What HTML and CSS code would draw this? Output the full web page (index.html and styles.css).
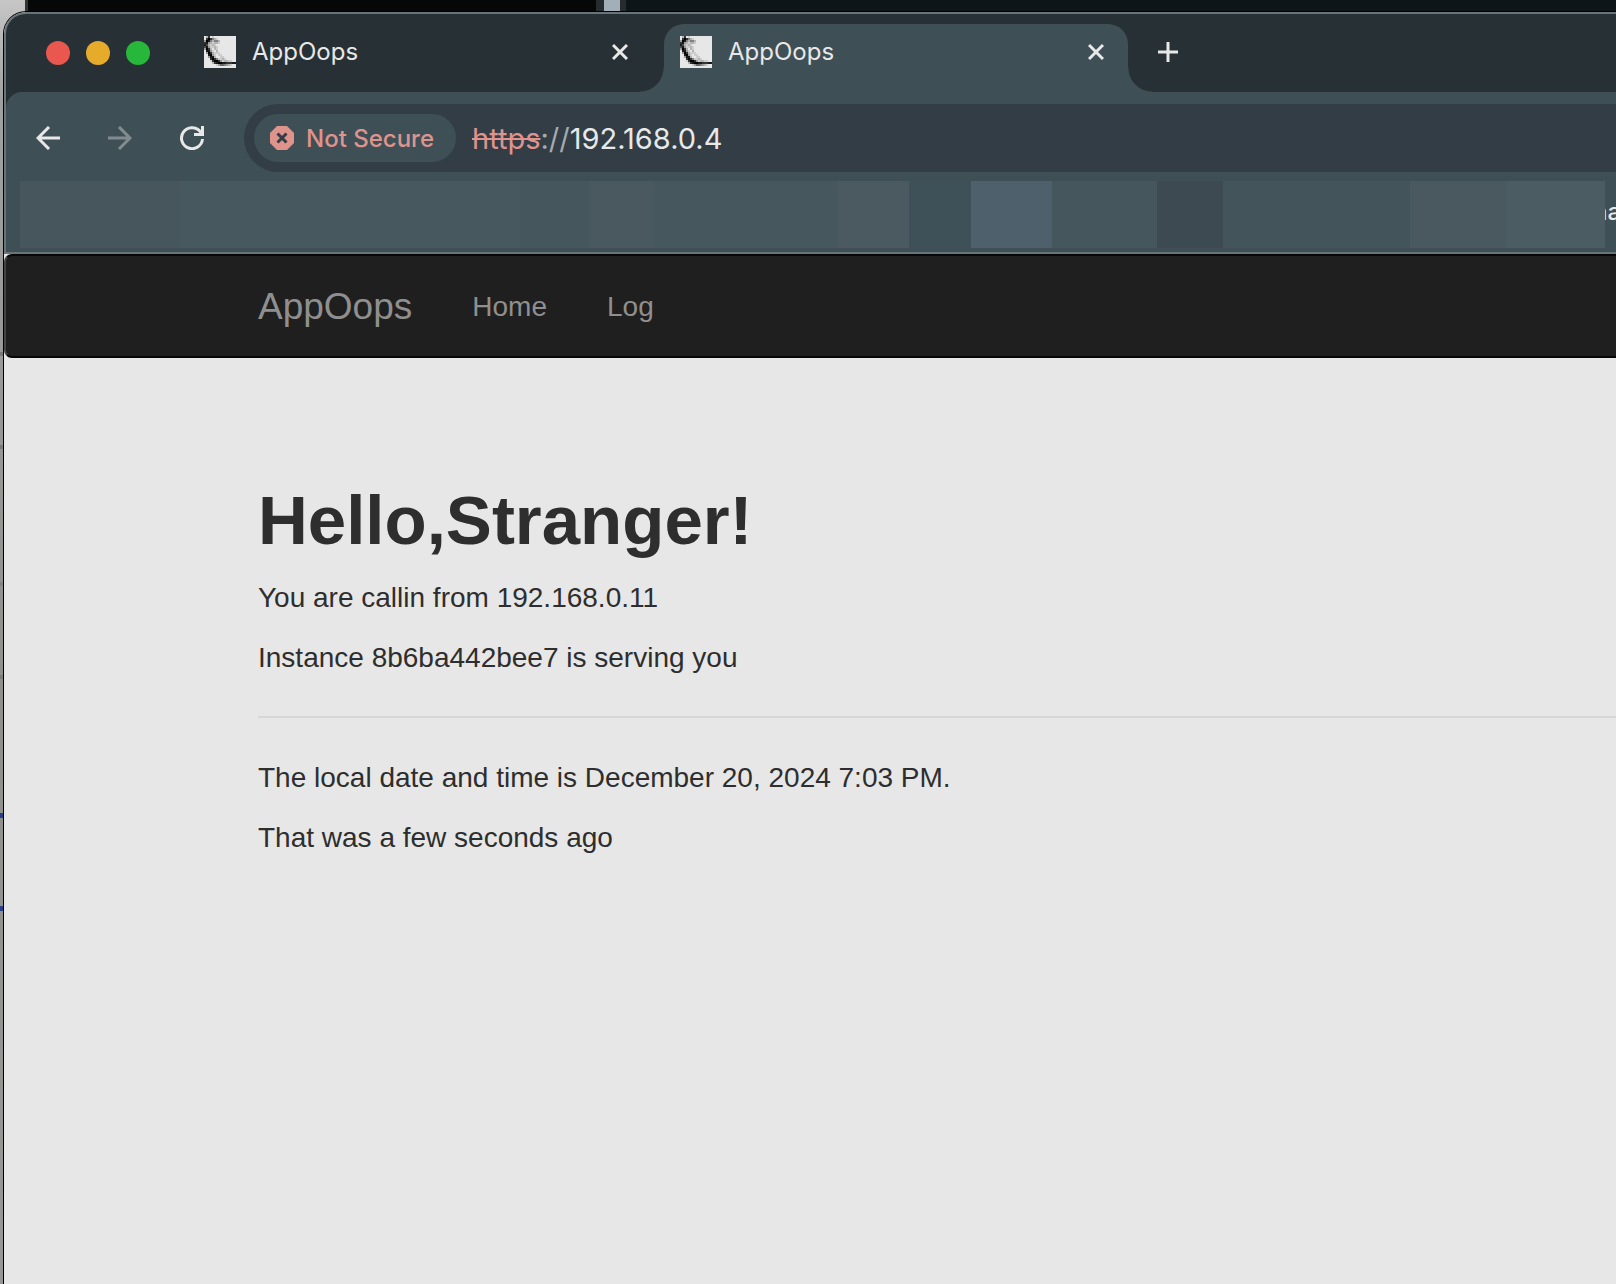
FILE: index.html
```html
<!DOCTYPE html>
<html lang="en">
<head>
<meta charset="utf-8">
<title>AppOops</title>
<link rel="stylesheet" href="styles.css">
</head>
<body>
<div class="backdrop" aria-hidden="true"></div>
<div class="window">
  <header class="chrome">
    <div class="tabstrip">
      <div class="lights">
        <button class="light light-close" aria-label="Close window"></button>
        <button class="light light-min" aria-label="Minimize window"></button>
        <button class="light light-max" aria-label="Zoom window"></button>
      </div>
      <div class="tab">
        <svg class="favicon" viewBox="0 0 16 16" aria-hidden="true"></svg>
        <span class="tab-title">AppOops</span>
        <button class="icon-btn" aria-label="Close tab"><svg width="16" height="16" viewBox="0 0 16 16"><path d="M1 1L15 15M15 1L1 15"/></svg></button>
      </div>
      <div class="tab tab-active">
        <svg class="favicon" viewBox="0 0 16 16" aria-hidden="true"></svg>
        <span class="tab-title">AppOops</span>
        <button class="icon-btn" aria-label="Close tab"><svg width="16" height="16" viewBox="0 0 16 16"><path d="M1 1L15 15M15 1L1 15"/></svg></button>
      </div>
      <button class="icon-btn new-tab" aria-label="New tab"><svg width="20" height="20" viewBox="0 0 20 20"><path d="M10 0V20M0 10H20"/></svg></button>
    </div>
    <div class="panel">
      <div class="toolbar">
        <button class="icon-btn" aria-label="Back"><svg width="24" height="24" viewBox="0 0 24 24"><path d="M24 12H2M13 1L2 12L13 23"/></svg></button>
        <button class="icon-btn icon-off" aria-label="Forward"><svg width="24" height="24" viewBox="0 0 24 24"><path d="M0 12H22M11 1L22 12L11 23"/></svg></button>
        <button class="icon-btn" aria-label="Reload"><svg width="24" height="24" viewBox="0 0 24 24"><path d="M22.500 13A10.500 10.500 0 1 1 20 5.300L22.500 8.500M22.500 0V8.500H14"/></svg></button>
        <div class="omnibox">
          <button class="chip">
            <svg width="24" height="24" viewBox="0 0 24 24" aria-hidden="true"><path class="octagon" d="M7 0H17L24 7V17L17 24H7L0 17V7Z"/><path class="cross" d="M7.500 7.500L16.500 16.500M16.500 7.500L7.500 16.500"/></svg>
            <span>Not Secure</span>
          </button>
          <label class="scheme" for="address"><s>https</s>://</label>
          <input class="address" id="address" type="text" value="192.168.0.4" spellcheck="false">
        </div>
      </div>
      <div class="bookmarks">
        <i class="mark m-a"></i><i class="mark m-b"></i><i class="mark m-c"></i><i class="mark m-d"></i><i class="mark m-e"></i><i class="mark m-f"></i><i class="mark m-g"></i><i class="mark m-h"></i><i class="mark m-i"></i><i class="mark m-j"></i><i class="mark m-k"></i><i class="mark m-l"></i><i class="mark m-m"></i>
        <a class="bookmark" href="#">na</a>
      </div>
    </div>
  </header>
  <div class="page">
    <nav class="navbar">
      <a class="brand" href="#">AppOops</a>
      <a class="nav-link" href="#">Home</a>
      <a class="nav-link" href="#">Log</a>
    </nav>
    <main class="container">
      <h1>Hello,Stranger!</h1>
      <p>You are callin from 192.168.0.11</p>
      <p>Instance 8b6ba442bee7 is serving you</p>
      <hr>
      <p>The local date and time is December 20, 2024 7:03 PM.</p>
      <p>That was a few seconds ago</p>
    </main>
  </div>
</div>
<script src="favicon.js"></script>
</body>
</html>
```
FILE: styles.css
```css
* {
  box-sizing: border-box;
}

body {
  margin: 0;
  min-height: 100vh;
  display: flex;
  padding: 12px 0 0 4px;
  background: #9a9a97;
  overflow-x: hidden;
}

/* Other windows that show behind the browser window */
.backdrop {
  position: absolute;
  inset: 0;
  background:
    linear-gradient(#a3afb8, #a3afb8) 604px 0 / 16px 12px no-repeat,
    linear-gradient(#262b2d, #262b2d) 596px 0 / 30px 12px no-repeat,
    linear-gradient(#0e1519, #0e1519) 626px 0 / 100% 12px no-repeat,
    linear-gradient(#060808, #060808) 28px 0 / 568px 12px no-repeat,
    linear-gradient(#333, #333) 25px 0 / 3px 12px no-repeat,
    linear-gradient(#77797c, #77797c) 0 352px / 3px 4px no-repeat,
    linear-gradient(#77797c, #77797c) 0 445px / 3px 4px no-repeat,
    linear-gradient(#858585, #858585) 0 582px / 3px 4px no-repeat,
    linear-gradient(#7d7d7d, #7d7d7d) 0 675px / 3px 4px no-repeat,
    linear-gradient(#26408a, #26408a) 0 813px / 3px 5px no-repeat,
    linear-gradient(#26408a, #26408a) 0 906px / 3px 5px no-repeat,
    linear-gradient(#c6c6c6, #a0a09f 100px, #8f8f8c 700px, #979795);
}

.window {
  position: relative;
  flex: 1;
  min-width: 0;
  display: flex;
  flex-direction: column;
  border-radius: 22px 0 0 0;
  background: #e7e7e7;
  box-shadow: 0 0 0 1px #000;
  overflow: hidden;
}

.chrome {
  border: 2px solid #67747a;
  border-right: 0;
  border-radius: 22px 0 0 0;
  background: #273135;
  font-family: Inter, "Liberation Sans", sans-serif;
  color: #e8e8e8;
}

button {
  border: 0;
  padding: 0;
  background: none;
  color: inherit;
  font: inherit;
}

.tabstrip {
  display: flex;
  height: 78px;
  padding: 10px 0 0 40px;
}

.lights {
  display: flex;
  gap: 16px;
  padding-top: 17px;
  width: 142px;
}

.light {
  width: 24px;
  height: 24px;
  border-radius: 50%;
}

.light-close { background: #e9574f; }
.light-min { background: #e7ab2b; }
.light-max { background: #26b73b; }

.tab {
  position: relative;
  display: flex;
  align-items: center;
  gap: 16px;
  width: 476px;
  padding: 0 36px 12px 16px;
  font-size: 24px;
  line-height: 32px;
}

.tab-active {
  width: 464px;
  padding-right: 24px;
  border-radius: 20px 20px 0 0;
  background: #3e4f56;
}

/* Flared feet of the active tab */
.tab-active::before,
.tab-active::after {
  content: "";
  position: absolute;
  bottom: 0;
  width: 24px;
  height: 24px;
}

.tab-active::before {
  right: 100%;
  background: radial-gradient(circle at 0 0, transparent 23px, #3e4f56 24px);
}

.tab-active::after {
  left: 100%;
  background: radial-gradient(circle at 100% 0, transparent 23px, #3e4f56 24px);
}

.favicon {
  width: 32px;
  height: 32px;
  background: #e7e7e7;
}

.tab-title {
  flex: 1;
}

.icon-btn {
  display: flex;
  align-items: center;
}

.icon-btn path {
  fill: none;
  stroke: #e8e8e8;
  stroke-width: 3;
}

.icon-off {
  opacity: 0.4;
}

.new-tab {
  padding: 0 30px 12px;
}

.panel {
  border-radius: 16px 0 0 0;
  background: #3e4f56;
}

.toolbar {
  display: flex;
  gap: 48px;
  padding: 12px 0 9px 30px;
}

.omnibox {
  flex: 1;
  min-width: 0;
  display: flex;
  align-items: center;
  height: 68px;
  margin-left: -8px;
  padding-left: 10px;
  border-radius: 34px 0 0 34px;
  background: #323d46;
  font-size: 29px;
}

.chip {
  display: flex;
  align-items: center;
  gap: 12px;
  height: 48px;
  width: 202px;
  padding-left: 16px;
  border-radius: 24px;
  background: #3e4f56;
  color: #df938d;
  font-size: 24px;
  font-weight: 500;
  white-space: nowrap;
}

.octagon {
  fill: #df938d;
}

.cross {
  fill: none;
  stroke: #323d46;
  stroke-width: 3;
}

.scheme {
  padding-left: 16px;
  color: #a4abaf;
}

.scheme s {
  color: #df938d;
}

.address {
  flex: 1;
  min-width: 0;
  border: 0;
  padding: 0;
  background: none;
  color: #e8e8e8;
  font: inherit;
}

.bookmarks {
  display: flex;
  height: 71px;
  padding: 0 0 4px 14px;
  overflow: hidden;
}

.mark { flex: none; }
.m-a { width: 160px; background: #46565c; }
.m-b { width: 340px; background: #48585f; }
.m-c { width: 69px; background: #46565d; }
.m-d { width: 65px; background: #49595f; }
.m-e { width: 183px; background: #47575e; }
.m-f { width: 72px; background: #4a5a60; }
.m-g { width: 62px; background: #3f5158; }
.m-h { width: 81px; background: #4f606d; }
.m-i { width: 105px; background: #46565d; }
.m-j { width: 66px; background: #3d4a51; }
.m-k { width: 187px; background: #44545b; }
.m-l { width: 96px; background: #49595f; }
.m-m { width: 99px; background: #4c5c63; }

.bookmark {
  display: flex;
  flex: 1;
  min-width: 0;
  text-indent: -12px;
  overflow: hidden;
  color: #e8e8e8;
  font-size: 24px;
  font-weight: 500;
  line-height: 62px;
  text-decoration: none;
}

.page {
  font: 28px/40px "Liberation Sans", Arial, sans-serif;
  color: #2e2e2e;
}

.navbar {
  display: flex;
  align-items: center;
  gap: 60px;
  height: 104px;
  padding: 2px 0 0 252px;
  border: 2px solid #070707;
  border-left-color: #444;
  border-right: 0;
  border-radius: 8px 0 0 8px;
  background: #1f1f1f;
}

.navbar a {
  color: #8f8f8f;
  text-decoration: none;
}

.navbar .brand {
  font-size: 37px;
}

.container {
  padding: 123px 0 40px 254px;
}

h1 {
  margin: 0 0 17px;
  font-size: 69px;
  line-height: 80px;
}

p {
  margin: 0 0 20px;
}

hr {
  margin: 38px 0 40px;
  border: 0;
  border-top: 2px solid #d7d7d7;
}
```
FILE: favicon.js
```js
// Pixel rows of the favicon: 0 is blank, 9 is black
const rows = [
  "0270100000000000",
  "0797421000000000",
  "3984244200000000",
  "7832122100000000",
  "8621210000000000",
  "6831121000000000",
  "3972021000000000",
  "0883102000000000",
  "0397211100000000",
  "0089310110000000",
  "0038820011000000",
  "0007974112100000",
  "0001799731221100",
  "0000278998877788",
  "0000001355432100"
];

document.querySelectorAll(".favicon").forEach((icon) => {
  rows.forEach((row, y) => {
    [...row].forEach((level, x) => {
      if (level === "0") return;
      const cell = document.createElementNS("http://www.w3.org/2000/svg", "rect");
      cell.setAttribute("x", x);
      cell.setAttribute("y", y);
      cell.setAttribute("width", 1);
      cell.setAttribute("height", 1);
      cell.setAttribute("fill-opacity", level / 9);
      icon.appendChild(cell);
    });
  });
});
```
